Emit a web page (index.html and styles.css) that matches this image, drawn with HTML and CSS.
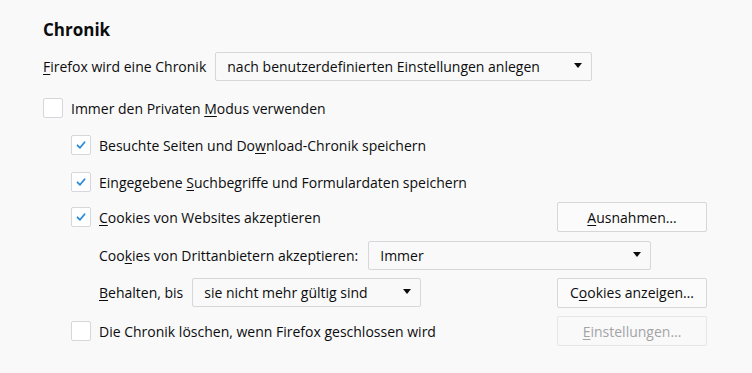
FILE: index.html
```html
<!DOCTYPE html>
<html lang="de">
<head>
<meta charset="utf-8">
<link rel="stylesheet" href="styles.css">
</head>
<body>
<section class="pane">
  <h2 class="title">Chronik</h2>
  <div class="row r-mode">
    <span class="label"><u>F</u>irefox wird eine Chronik</span>
    <div class="select sel-mode"><span>nach benutzerdefinierten Einstellungen anlegen</span><i class="arrow"></i></div>
  </div>
  <div class="row r-private">
    <span class="check"></span><span class="label">Immer den Privaten <u>M</u>odus verwenden</span>
  </div>
  <div class="indent">
    <div class="row r-hist">
      <span class="check on"><svg viewBox="0 0 12 12"><path d="M2.5 6.3 L5 8.8 L9.6 3.2" /></svg></span><span class="label">Besuchte Seiten und Do<u>w</u>nload-Chronik speichern</span>
    </div>
    <div class="row r-form">
      <span class="check on"><svg viewBox="0 0 12 12"><path d="M2.5 6.3 L5 8.8 L9.6 3.2" /></svg></span><span class="label">Eingegebene <u>S</u>uchbegriffe und Formulardaten speichern</span>
    </div>
    <div class="row split r-cookies">
      <div class="lhs"><span class="check on"><svg viewBox="0 0 12 12"><path d="M2.5 6.3 L5 8.8 L9.6 3.2" /></svg></span><span class="label"><u>C</u>ookies von Websites akzeptieren</span></div>
      <button class="btn"><u>A</u>usnahmen…</button>
    </div>
    <div class="sub">
      <div class="row r-third">
        <span class="label">Coo<u>k</u>ies von Drittanbietern akzeptieren:</span>
        <div class="select sel-third"><span>Immer</span><i class="arrow"></i></div>
      </div>
      <div class="row split r-keep">
        <div class="lhs">
          <span class="label"><u>B</u>ehalten, bis</span>
          <div class="select sel-keep"><span>sie nicht mehr gültig sind</span><i class="arrow"></i></div>
        </div>
        <button class="btn">C<u>o</u>okies anzeigen…</button>
      </div>
    </div>
    <div class="row split r-clear">
      <div class="lhs"><span class="check"></span><span class="label">Die Chronik löschen, wenn Firefox <u>g</u>eschlossen wird</span></div>
      <button class="btn disabled"><u>E</u>instellungen…</button>
    </div>
  </div>
</section>
</body>
</html>
```

FILE: styles.css
```css
html, body {
  margin: 0;
  padding: 0;
  background: #f9f9fa;
}
body {
  font-family: "Open Sans", "Noto Sans", sans-serif;
  font-size: 14px;
  color: #0c0c0d;
}
.pane {
  padding: 0 45px 0 43px;
  width: 664px;
}
.title {
  margin: 18px 0 0;
  font-size: 17px;
  line-height: 24px;
  font-weight: 700;
}
.row {
  display: flex;
  align-items: center;
  height: 30px;
}
.split {
  justify-content: space-between;
}
.lhs {
  display: flex;
  align-items: center;
}
.label {
  white-space: nowrap;
}
u {
  text-decoration: underline;
  text-underline-offset: 2px;
}
.r-mode { margin-top: 10px; height: 29px; }
.r-private { margin-top: 12px; }
.r-hist { margin-top: 7px; }
.r-form { margin-top: 7px; }
.r-cookies { margin-top: 5px; }
.r-third { margin-top: 9px; height: 29px; }
.r-keep { margin-top: 8px; height: 29px; }
.r-clear { margin-top: 9px; }
.indent { padding-left: 28px; }
.sub { padding-left: 28px; }

.check {
  width: 18px;
  height: 18px;
  border: 1px solid #d7d7db;
  border-radius: 2px;
  background: #ffffff;
  margin-right: 8px;
  flex: none;
  display: flex;
  align-items: center;
  justify-content: center;
}
.check svg {
  width: 12px;
  height: 12px;
}
.check svg path {
  fill: none;
  stroke: #2b8ad8;
  stroke-width: 1.8;
  stroke-linecap: round;
  stroke-linejoin: round;
}
.select {
  box-sizing: border-box;
  height: 29px;
  border: 1px solid #d7d7db;
  border-radius: 2px;
  background: #f9f9fa;
  display: flex;
  align-items: center;
  justify-content: space-between;
  padding: 0 9px 0 11px;
  margin-left: 9px;
  white-space: nowrap;
}
.sel-mode { width: 377px; }
.sel-third { width: 283px; margin-left: 10px; }
.sel-keep { width: 229px; }
.arrow {
  width: 0;
  height: 0;
  border-left: 4.5px solid transparent;
  border-right: 4.5px solid transparent;
  border-top: 5px solid #0c0c0d;
  margin-bottom: 2px;
}
.btn {
  box-sizing: border-box;
  width: 150px;
  height: 30px;
  border: 1px solid #d7d7db;
  border-radius: 2px;
  background: #fbfbfb;
  font: inherit;
  color: #0c0c0d;
  padding: 0;
}
.btn.disabled {
  color: #a4a4a6;
  border-color: #e6e6e8;
  background: #f9f9fa;
}
```
